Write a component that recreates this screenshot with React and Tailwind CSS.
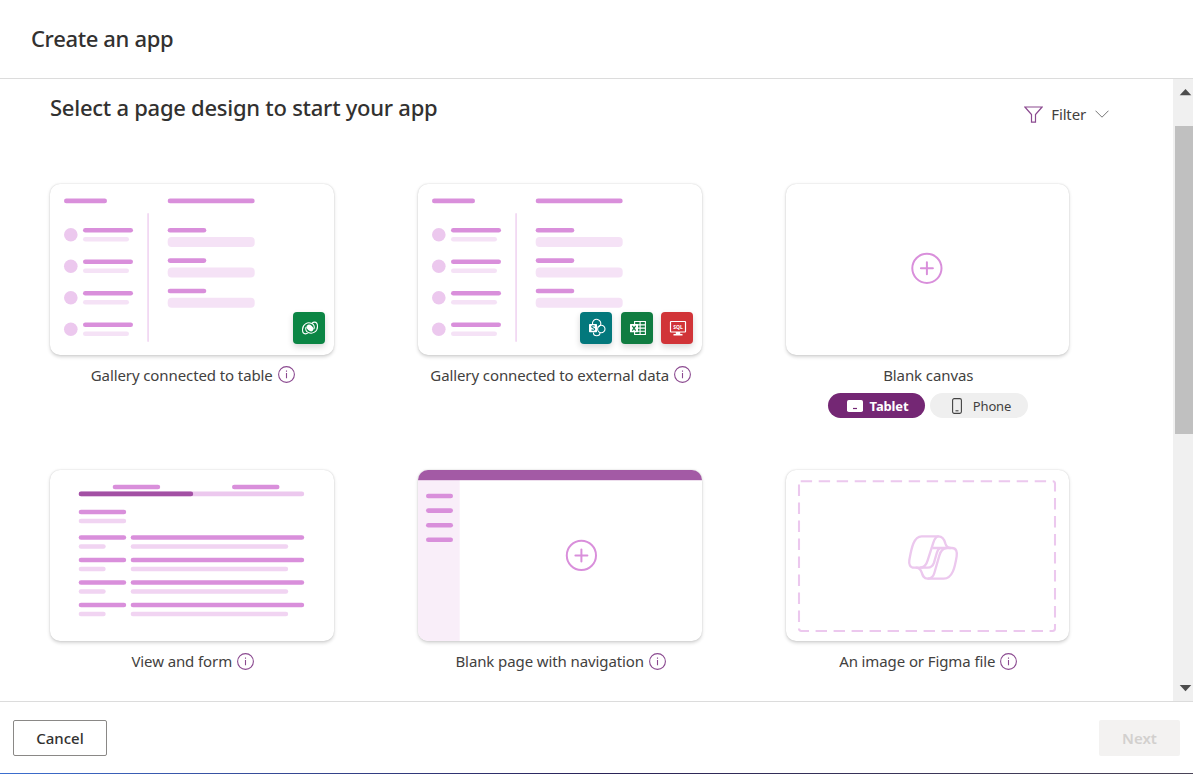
const ORCHID = "#d98fdb";
const LILAC = "#ecc8ee";
const BLUSH = "#f5e2f6";

/* Rounded bar, placed by its left end and vertical centre. */
function Bar({ x, cy, w, h = 4.6, fill = ORCHID }) {
  return <rect x={x} y={cy - h / 2} width={w} height={h} rx={Math.min(h / 2, 4)} fill={fill} />;
}

function Art({ children }) {
  return (
    <svg viewBox="0 0 284 171" className="block h-[171px] w-[284px]" fill="none">
      {children}
    </svg>
  );
}

function GalleryArt() {
  return (
    <Art>
      <Bar x={14} cy={16.9} w={43} />
      <Bar x={117.7} cy={16.9} w={87} />
      <rect x={97.2} y={29} width={1.8} height={129} rx={0.9} fill="#f2d9f3" />
      {[50.8, 82.3, 113.8, 145.3].map((cy) => (
        <g key={cy}>
          <circle cx={20.8} cy={cy} r={6.8} fill={LILAC} />
          <Bar x={33} cy={cy - 4.6} w={50} />
          <Bar x={33} cy={cy + 4.4} w={46} fill={BLUSH} />
        </g>
      ))}
      {[46.2, 76.6, 107].map((cy) => (
        <g key={cy}>
          <Bar x={117.7} cy={cy} w={38.6} />
          <Bar x={117.7} cy={cy + 11.8} w={87} h={10} fill={BLUSH} />
        </g>
      ))}
    </Art>
  );
}

function Plus({ cx, cy }) {
  return (
    <g stroke={ORCHID} strokeWidth={2} strokeLinecap="round">
      <circle cx={cx} cy={cy} r={14.6} />
      <path d={`M${cx - 6} ${cy}h12M${cx} ${cy - 6}v12`} />
    </g>
  );
}

function BlankArt() {
  return (
    <Art>
      <Plus cx={140.9} cy={84.3} />
    </Art>
  );
}

function FormArt() {
  return (
    <Art>
      <Bar x={62.7} cy={17} w={47.5} />
      <Bar x={182} cy={17} w={47.5} />
      <Bar x={28.7} cy={23.9} w={225.5} fill={LILAC} />
      <Bar x={28.7} cy={23.9} w={114.5} fill="#a350a4" />
      <Bar x={28.7} cy={42} w={47.5} />
      <Bar x={28.7} cy={51} w={47.5} fill="#f1d4f2" />
      {[67.5, 90, 112.5, 135].map((cy) => (
        <g key={cy}>
          <Bar x={28.7} cy={cy} w={47.5} />
          <Bar x={80.7} cy={cy} w={173.5} />
          <Bar x={28.7} cy={cy + 9} w={27} h={4.4} fill="#f1d4f2" />
          <Bar x={80.7} cy={cy + 9} w={157.5} h={4.4} fill="#f1d4f2" />
        </g>
      ))}
    </Art>
  );
}

function NavArt() {
  return (
    <Art>
      <rect width={41.7} height={171} fill="#f9eef9" />
      <rect width={284} height={10.2} fill="#a35aa5" />
      {[26, 40.6, 55.2, 69.8].map((cy) => (
        <Bar key={cy} x={8} cy={cy} w={27} />
      ))}
      <Plus cx={163.4} cy={85.4} />
    </Art>
  );
}

function CopilotArt() {
  return (
    <Art>
      <path
        d="M14.7 11.3H266.6Q269 11.3 269 13.7V158.6Q269 161 266.6 161H15.4Q13 161 13 158.6V12"
        stroke={LILAC}
        strokeWidth={2.1}
        strokeDasharray="11.4 6.6"
      />
      <g transform="translate(-6 -10) scale(.33333)" stroke={LILAC} strokeWidth={7} strokeLinejoin="round">
        <path d="M425 229H476C489 229 493 239 496 250C499 260 503 264 512 264H516C529 264 532 275 530 289C525 320 518 356 491 356H443C431 356 428 347 425 337C421 326 416 323 407 323H402C390 323 386 313 388 300C394 268 400 229 425 229Z" />
        <path d="M476 229C466 229 463 238 460 248L443 301C439 315 433 323 420 323" />
        <path d="M457 264H512M407 323H443C455 323 459 317 462 308L470 280C473 270 476 264 484 264" />
        <path d="M500 264C488 264 482 273 478 287L463 339C460 350 454 356 443 356" />
      </g>
    </Art>
  );
}

function Tile({ className, children }) {
  return (
    <div className={`flex size-8 items-center justify-center rounded shadow-[0_3px_6px_rgba(0,0,0,0.16)] ${className}`}>
      <svg viewBox="0 0 32 32" className="size-8" fill="none" stroke="#fff">
        {children}
      </svg>
    </div>
  );
}

/* One half of the Dataverse mark; the other half is the same shape turned by 180 degrees. */
const SWIRL = "M18.5 11.4C14.5 9.6 9.5 12.4 9.5 17.6C9.5 20.2 10.6 21.9 12.4 21.9C13.6 21.9 14.5 21.3 15.3 20.6C12.8 19.6 12.2 17 13.1 15";

function DataverseTile() {
  return (
    <Tile className="bg-[#0b8544]">
      <path d={SWIRL} strokeWidth={1.1} />
      <path d={SWIRL} strokeWidth={1.1} transform="rotate(180 17 16)" />
      <ellipse cx={17} cy={16} rx={3.8} ry={2.7} transform="rotate(40 17 16)" fill="#fff" stroke="none" />
    </Tile>
  );
}

function SharePointTile() {
  return (
    <Tile className="mr-px bg-[#03787c]">
      <g strokeWidth={1.1}>
        <path d="M12.5 12.2a4.2 4.2 0 1 1 7.6 1.7" />
        <path d="M17.6 17a3.7 3.7 0 1 1 3.6 3.7c-2 0-3.6-1.7-3.6-3.7ZM20 20.5a3.3 3.3 0 1 1-6.6 0" />
        <path d="M20.1 13.4a4 4 0 0 1-2.5 1.7" />
      </g>
      <rect x={9} y={12} width={8} height={8.3} rx={0.7} fill="#fff" stroke="none" />
      <path d="M14.7 14.2c-.9-.6-3-.6-3 .6 0 1.5 3 .9 3 2.4 0 1.3-2.2 1.3-3.2.6" stroke="#03787c" strokeWidth={1.1} />
    </Tile>
  );
}

function ExcelTile() {
  return (
    <Tile className="bg-[#107c41]">
      <path d="M13.6 9.5h10.8v13H13.6zM13.6 12.9h10.8M13.6 16.1h10.8M13.6 19.3h10.8M19.1 9.5v13" strokeWidth={1.1} />
      <rect x={9} y={12} width={8} height={8.3} rx={0.6} fill="#fff" stroke="none" />
      <path d="M11.3 13.9l3.4 4.7M14.7 13.9l-3.4 4.7" stroke="#107c41" strokeWidth={1.2} />
    </Tile>
  );
}

function SqlTile() {
  return (
    <Tile className="bg-[#d13438]">
      <rect x={9.5} y={9.5} width={15} height={10.5} rx={0.5} strokeWidth={1.2} />
      <path d="M14.8 20h4.4v2h2.3v1.5h-9V22h2.3z" fill="#fff" stroke="none" />
      <text x={17} y={16.7} textAnchor="middle" textLength={9.4} fill="#fff" stroke="none" className="font-['Noto_Sans',sans-serif] text-[5px] font-bold">
        SQL
      </text>
    </Tile>
  );
}

function Info() {
  return (
    <svg viewBox="0 0 17 17" className="size-[17px] shrink-0" fill="none" stroke="#8b4a90">
      <circle cx={8.5} cy={8.5} r={7.9} strokeWidth={1.1} />
      <path d="M8.5 7v5.2M8.5 4.4v1.4" strokeWidth={1.1} />
    </svg>
  );
}

function Card({ label, info = true, art, tiles, labelClass = "items-center", children }) {
  return (
    <div className="flex flex-col items-center">
      <div className="relative h-[171px] w-full overflow-hidden rounded-[10px] bg-white shadow-[0_1.6px_3.6px_rgba(0,0,0,0.17),0_0_1.5px_rgba(0,0,0,0.14)]">
        {art}
        {tiles && <div className="absolute right-[9px] bottom-[11px] flex gap-2">{tiles}</div>}
      </div>
      <div className={`mt-2 flex h-6 gap-[5px] pl-[1.5px] ${labelClass}`}>
        <span className="whitespace-nowrap text-[15px] leading-6 tracking-[-0.1px]">{label}</span>
        {info && <Info />}
      </div>
      {children}
    </div>
  );
}

function SizePicker() {
  return (
    <div className="mt-1.5 flex gap-[5px] text-[13px] leading-[25px]">
      <button className="flex h-[25px] w-[97px] items-center justify-center gap-[7px] rounded-full bg-[#742774] pl-[3px] font-bold tracking-[-0.15px] text-white">
        <svg viewBox="0 0 16 12" className="h-3 w-4">
          <rect width={16} height={12} rx={1.8} fill="#fff" />
          <path d="M6 8.5h4" stroke="#742774" strokeWidth={1.2} />
        </svg>
        <span className="pt-px">Tablet</span>
      </button>
      <button className="flex h-[25px] w-[98px] items-center justify-center gap-[11px] rounded-full bg-[#efefef] pl-[6px] tracking-[-0.15px]">
        <svg viewBox="0 0 10 16" className="h-4 w-2.5" fill="none" stroke="#424242">
          <rect x={0.6} y={0.6} width={8.8} height={14.8} rx={1.6} strokeWidth={1.1} />
          <path d="M3.5 12.8h3" strokeWidth={1.1} />
        </svg>
        <span className="pt-px">Phone</span>
      </button>
    </div>
  );
}

function Filter() {
  return (
    <button className="mt-[23px] flex h-6 items-center">
      <svg viewBox="0 0 19 17" className="h-[17px] w-[19px]" fill="none" stroke="#8b4a90" strokeWidth={1.2}>
        <path d="M.9 1h17.2L11.5 8.5v7.7h-4V8.5z" />
      </svg>
      <span className="ml-2 text-[15px] tracking-[-0.15px]">Filter</span>
      <svg viewBox="0 0 14 8" className="ml-[9px] h-2 w-3.5" fill="none" stroke="#777" strokeWidth={1}>
        <path d="M.5.7L7 7.2 13.5.7" />
      </svg>
    </button>
  );
}

function Scrollbar() {
  return (
    <div className="flex w-5 flex-col items-end bg-[#f0f0f0]">
      <svg viewBox="0 0 18 47" className="h-[47px] w-[18px]">
        <path d="M4.7 16.3h11.6L10.5 10z" fill="#4d4d4d" />
      </svg>
      <div className="h-[308px] w-[18px] bg-[#c0c0c0]" />
      <svg viewBox="0 0 18 20" className="mt-auto h-5 w-[18px]">
        <path d="M4.7 4h11.6L10.5 10.3z" fill="#4d4d4d" />
      </svg>
    </div>
  );
}

export default function App() {
  return (
    <div className="flex h-[774px] w-[1193px] flex-col overflow-hidden bg-white font-['Noto_Sans',sans-serif] text-[#424140]">
      <header className="flex h-[79px] shrink-0 items-center border-b border-[#dcdcdc] pb-0.5 pl-[31px]">
        <h1 className="text-[22px] font-medium tracking-[-0.35px] text-[#323130]">Create an app</h1>
      </header>

      <main className="flex h-[622px] shrink-0">
        <section className="flex flex-1 flex-col overflow-hidden pl-[50px]">
          <div className="flex h-[105px] shrink-0 justify-between pr-16">
            <h2 className="mt-[11px] text-[22px] leading-[34px] font-medium tracking-[-0.26px] text-[#323130]">
              Select a page design to start your app
            </h2>
            <Filter />
          </div>
          <div className="grid grid-cols-[284px_284px_283px] grid-rows-[286px_auto] gap-x-[84px]">
            <Card
              label="Gallery connected to table"
              labelClass="items-start [&>svg]:mt-[3px]"
              art={<GalleryArt />}
              tiles={<DataverseTile />}
            />
            <Card
              label="Gallery connected to external data"
              labelClass="items-start [&>svg]:mt-[3px]"
              art={<GalleryArt />}
              tiles={
                <>
                  <SharePointTile />
                  <ExcelTile />
                  <SqlTile />
                </>
              }
            />
            <Card label="Blank canvas" info={false} art={<BlankArt />}>
              <SizePicker />
            </Card>
            <Card label="View and form" art={<FormArt />} />
            <Card label="Blank page with navigation" art={<NavArt />} />
            <Card label="An image or Figma file" art={<CopilotArt />} />
          </div>
        </section>
        <Scrollbar />
      </main>

      <footer className="flex h-[72px] shrink-0 items-center justify-between border-t border-[#dcdcdc] px-[13px] pt-px text-[15px]">
        <button className="h-9 w-[94px] rounded-[2px] border border-[#8a8886] font-medium text-[#323130]">Cancel</button>
        <button className="h-9 w-[81px] rounded-[2px] bg-[#f3f2f1] font-semibold text-[#d2d0ce]">Next</button>
      </footer>
      <div className="h-px shrink-0 bg-linear-to-r from-[#3b6fd0] via-[#2a2358] to-[#4a4458]" />
    </div>
  );
}
